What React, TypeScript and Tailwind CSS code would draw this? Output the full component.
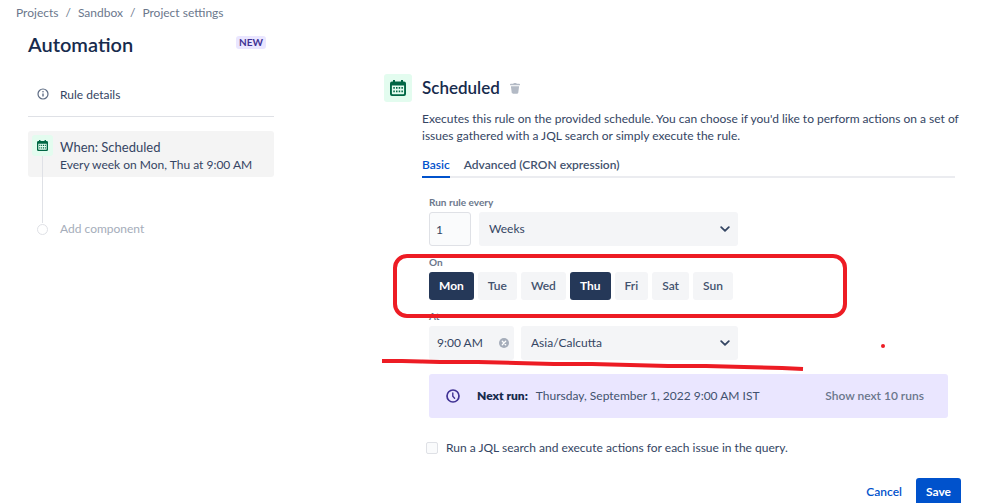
import { useState } from "react";

const days = ["Mon", "Tue", "Wed", "Thu", "Fri", "Sat", "Sun"];

function CalendarIcon({ className }: { className: string }) {
  return (
    <svg viewBox="0 0 16 16" className={className} aria-hidden="true">
      <path
        fill="currentColor"
        fillRule="evenodd"
        d="M3 0h2v1.500h6V0h2v1.500h1A2 2 0 0 1 16 3.500V14a2 2 0 0 1-2 2H2a2 2 0 0 1-2-2V3.500a2 2 0 0 1 2-2h1zM1.900 5.500v8c0 .4.3.7.7.7h10.800c.4 0 .7-.3.7-.7v-8z"
      />
      <path
        fill="currentColor"
        d="M6 7h1.500v1.700H6zM8.700 7h1.500v1.700H8.700zM11.400 7h1.500v1.700h-1.500zM3.300 7h1.500v1.700H3.300zM3.300 10.600h1.500v1.700H3.300zM6 10.600h1.500v1.700H6zM8.700 10.600h1.500v1.700H8.700zM11.400 10.600h1.500v1.700h-1.500z"
      />
    </svg>
  );
}

function InfoIcon() {
  return (
    <svg viewBox="0 0 12 12" className="size-3 text-[#5e6c84]" fill="none" stroke="currentColor" aria-hidden="true">
      <circle cx="6" cy="6" r="5" strokeWidth="1.200" />
      <path d="M6 5.500v3" strokeWidth="1.400" />
      <circle cx="6" cy="3.700" r=".8" fill="currentColor" stroke="none" />
    </svg>
  );
}

function TrashIcon() {
  return (
    <svg viewBox="0 0 10 11" className="h-[11px] w-[10px]" fill="currentColor" aria-hidden="true">
      <path d="M0 1.500C0 1 .4.800.800.800H3.300L3.800 0h2.400l.5.800h2.500c.5 0 .8.200.8.700v.700H0zM.900 3.200h8.200L8.300 9.500c-.1.800-.6 1.200-1.300 1.200H3c-.7 0-1.200-.4-1.300-1.200z" />
    </svg>
  );
}

function Chevron() {
  return (
    <svg
      viewBox="0 0 10 6"
      className="pointer-events-none col-start-1 row-start-1 mr-2 h-[6px] w-[10px] self-center justify-self-end text-[#344563]"
      fill="none"
      stroke="currentColor"
      aria-hidden="true"
    >
      <path d="M1.200 1.200 5 4.800l3.800-3.600" strokeWidth="1.800" strokeLinecap="round" strokeLinejoin="round" />
    </svg>
  );
}

function Select({ label, options, className }: { label: string; options: string[]; className: string }) {
  return (
    <div className={`grid ${className}`}>
      <select
        aria-label={label}
        className="col-start-1 row-start-1 h-[34px] appearance-none rounded-[3px] bg-[#f4f5f7] pl-[10px] pr-8 text-[#344563]"
      >
        {options.map((o) => (
          <option key={o}>{o}</option>
        ))}
      </select>
      <Chevron />
    </div>
  );
}

function Sidebar() {
  return (
    <aside className="w-[246px] shrink-0">
      <div className="flex items-center justify-between pr-2">
        <h1 className="text-xl leading-7 font-semibold text-[#172b4d]">Automation</h1>
        <span className="mb-[3px] rounded-[3px] bg-[#eae6ff] px-[3px] text-[10px] leading-[13px] font-bold text-[#403294]">
          NEW
        </span>
      </div>
      <a href="#details" className="mt-[27px] flex h-[32px] items-start gap-[11px] border-b border-[#dfe1e6] pl-[9px] leading-5 text-[#344563]">
        <span className="flex h-[18px] items-center">
          <InfoIcon />
        </span>
        Rule details
      </a>
      <div className="relative mt-[14px]">
        <a href="#scheduled" className="flex h-[46px] gap-[7px] rounded-[3px] bg-[#f4f4f4] pt-1 pl-1 text-[#344563]">
          <span className="flex size-[21px] items-center justify-center rounded-[3px] bg-[#e3fcef] text-[#006644]">
            <CalendarIcon className="size-[11px]" />
          </span>
          <span className="flex flex-col pt-[2px]">
            <span className="text-[13px] leading-5">When: Scheduled</span>
            <span className="leading-4">Every week on Mon, Thu at 9:00 AM</span>
          </span>
        </a>
        <span className="absolute top-[25px] left-[14px] h-[67px] w-px bg-[#dfe1e6]" />
        <button className="mt-[42px] flex items-center gap-3 pl-[9px] leading-5 text-[#a5adba]">
          <span className="size-[11px] rounded-full border border-[#dfe1e6]" />
          Add component
        </button>
      </div>
    </aside>
  );
}

function ScheduleForm() {
  const [selected, setSelected] = useState(["Mon", "Thu"]);
  const toggle = (day: string) =>
    setSelected(selected.includes(day) ? selected.filter((d) => d !== day) : [...selected, day]);

  return (
    <form className="relative mt-4 pr-[13px] pl-[7px]" onSubmit={(e) => e.preventDefault()}>
      <label htmlFor="interval" className="block text-[10px] leading-4 font-bold text-[#6b778c]">
        Run rule every
      </label>
      <div className="mt-[2px] flex gap-2">
        <input
          id="interval"
          defaultValue="1"
          className="h-[34px] w-[42px] rounded-[3px] border border-[#dfe1e6] bg-[#fafbfc] px-[6px] text-[#344563]"
        />
        <Select label="Interval unit" options={["Weeks", "Days", "Months"]} className="w-[259px]" />
      </div>

      <div className="mt-2 text-[10px] leading-4 font-bold text-[#6b778c]">On</div>
      <div className="mt-[2px] flex gap-1">
        {days.map((day) => (
          <button
            key={day}
            type="button"
            aria-pressed={selected.includes(day)}
            onClick={() => toggle(day)}
            className={`h-[28px] rounded-[3px] px-[10px] ${
              selected.includes(day) ? "bg-[#253858] font-bold text-white" : "bg-[#f4f5f7] font-semibold text-[#42526e]"
            }`}
          >
            {day}
          </button>
        ))}
      </div>

      <label htmlFor="time" className="mt-2 block text-[10px] leading-4 font-bold text-[#6b778c]">
        At
      </label>
      <div className="mt-[2px] flex gap-[7px]">
        <div className="flex h-[34px] w-[85px] items-center rounded-[3px] bg-[#f4f5f7] pr-[5px] pl-2">
          <input id="time" defaultValue="9:00 AM" className="min-w-0 flex-1 text-[#344563]" />
          <button type="button" aria-label="Clear time" className="text-[#a5adba]">
            <svg viewBox="0 0 10 10" className="size-[10px]" aria-hidden="true">
              <circle cx="5" cy="5" r="5" fill="currentColor" />
              <path d="m3.300 3.300 3.400 3.400m0-3.400L3.300 6.700" stroke="#fff" strokeWidth="1.300" strokeLinecap="round" />
            </svg>
          </button>
        </div>
        <Select label="Time zone" options={["Asia/Calcutta", "UTC"]} className="w-[217px]" />
      </div>

      <div className="mt-[14px] flex h-[44px] items-center rounded-[3px] bg-[#eae6ff] pr-6 pl-[17px] text-[#42526e]">
        <svg viewBox="0 0 14 14" className="size-[14px] text-[#403294]" fill="none" stroke="currentColor" aria-hidden="true">
          <circle cx="7" cy="7" r="6" strokeWidth="1.700" />
          <path d="M6.800 4v3.300L8.600 9.200" strokeWidth="1.400" strokeLinecap="round" />
        </svg>
        <strong className="ml-[17px] font-extrabold text-[#172b4d]">Next run:</strong>
        <span className="ml-2">Thursday, September 1, 2022 9:00 AM IST</span>
        <button type="button" className="ml-auto font-semibold text-[#6b778c]">
          Show next 10 runs
        </button>
      </div>

      {/* hand-drawn markup over the day picker and the time row */}
      <div className="pointer-events-none absolute top-[60px] -left-[29px] h-[64px] w-[454px] rounded-[14px] border-4 border-[#ed1c24]" />
      <svg
        viewBox="0 0 504 30"
        className="pointer-events-none absolute top-[149px] -left-[40px] h-[30px] w-[504px]"
        fill="none"
        stroke="#ed1c24"
        aria-hidden="true"
      >
        <path d="M-5 18h25l38 1h38l38 1 38 1h38l38 1 38 1h38l38 1 38 1 21 1" strokeWidth="4" />
        <circle cx="501" cy="3" r="2" fill="#ed1c24" stroke="none" />
      </svg>
    </form>
  );
}

export default function App() {
  return (
    <div className="bg-white font-['Lato',sans-serif] text-xs text-[#344563]">
      <nav aria-label="Breadcrumb" className="flex gap-[7px] pt-[5px] pl-4 leading-4 text-[#6b778c]">
        <a href="#projects">Projects</a>
        <span>/</span>
        <a href="#sandbox">Sandbox</a>
        <span>/</span>
        <a href="#settings">Project settings</a>
      </nav>
      <div className="flex gap-[110px] pt-[9px] pr-[37px] pl-7">
        <Sidebar />
        <main className="min-w-0 flex-1 pt-[44px]">
          <div className="flex items-center">
            <span className="flex size-7 items-center justify-center rounded-[3px] bg-[#e3fcef] text-[#006644]">
              <CalendarIcon className="size-4" />
            </span>
            <h2 className="ml-[10px] text-[17px] leading-6 font-semibold text-[#172b4d]">Scheduled</h2>
            <button aria-label="Delete" className="ml-[10px] text-[#b3bac5]">
              <TrashIcon />
            </button>
          </div>
          <div className="pl-[38px]">
            <p className="mt-2 leading-[17px]">
              Executes this rule on the provided schedule. You can choose if you'd like to perform actions on a set of
              issues gathered with a JQL search or simply execute the rule.
            </p>
            <div role="tablist" className="mt-3 mr-[6px] flex gap-[14px] border-b-2 border-[#ebecf0]">
              <button role="tab" aria-selected="true" className="-mb-[2px] border-b-2 border-[#0052cc] pb-[2px] leading-[18px] font-semibold text-[#0052cc]">
                Basic
              </button>
              <button role="tab" aria-selected="false" className="pb-[2px] leading-[18px] font-semibold text-[#42526e]">
                Advanced (CRON expression)
              </button>
            </div>
            <ScheduleForm />
            <label className="mt-5 ml-1 flex items-center gap-2 leading-5">
              <input type="checkbox" className="size-3 appearance-none rounded-[2px] border border-[#dfe1e6] bg-[#fafbfc] checked:bg-[#0052cc]" />
              Run a JQL search and execute actions for each issue in the query.
            </label>
            <div className="mt-5 flex justify-end gap-[14px]">
              <button className="font-semibold text-[#0052cc]">Cancel</button>
              <button className="h-[28px] rounded-[3px] bg-[#0052cc] px-[10px] font-bold text-white">Save</button>
            </div>
          </div>
        </main>
      </div>
    </div>
  );
}
